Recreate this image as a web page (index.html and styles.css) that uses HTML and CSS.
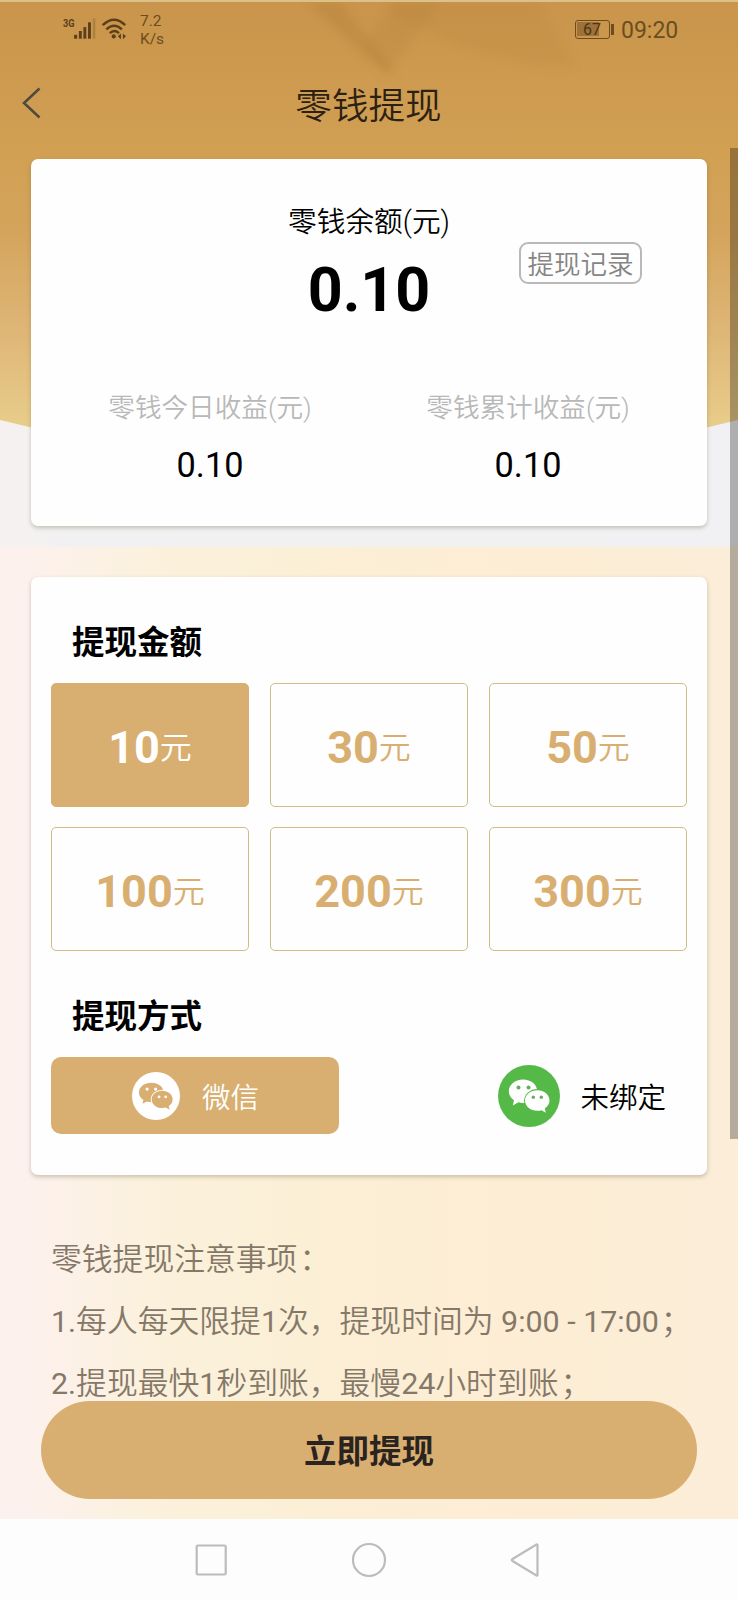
FILE: index.html
```html
<!DOCTYPE html>
<html lang="zh-CN">
<head>
<meta charset="utf-8">
<title>零钱提现</title>
<link rel="stylesheet" href="styles.css">
</head>
<body>
<div class="screen">
  <svg class="backdrop" width="738" height="547" viewBox="0 0 738 547" aria-hidden="true">
    <defs>
      <linearGradient id="gold" x1="0" y1="0" x2="0" y2="460" gradientUnits="userSpaceOnUse">
        <stop offset="0" stop-color="#c9944b"/>
        <stop offset=".33" stop-color="#d1a053"/>
        <stop offset=".5" stop-color="#d4a45c"/>
        <stop offset=".72" stop-color="#deb676"/>
        <stop offset=".92" stop-color="#e8cc8a"/>
      </linearGradient>
      <linearGradient id="grey" x1="0" y1="0" x2="1" y2="0">
        <stop offset="0" stop-color="#f6f1f1"/>
        <stop offset=".1" stop-color="#f1f1f1"/>
        <stop offset="1" stop-color="#f1f1f3"/>
      </linearGradient>
      <filter id="soft"><feGaussianBlur stdDeviation="4"/></filter>
    </defs>
    <rect width="738" height="547" fill="url(#grey)"/>
    <path d="M0 0H738V420Q369 512 0 420Z" fill="url(#gold)"/>
    <g fill="#a8782f" filter="url(#soft)">
      <path d="M308 2H340L368 36L396 74L368 60Z" opacity=".28"/>
      <path d="M388 2H536L576 66L540 66L470 50L400 20Z" opacity=".14"/>
      <path d="M366 42L392 2H440L385 78Z" opacity=".16"/>
    </g>
    <rect width="738" height="2" fill="#dbc088"/>
  </svg>

  <header class="status">
    <svg class="signal" width="80" height="32" viewBox="0 0 80 32" aria-hidden="true">
      <text class="net" x="0" y="12" textLength="12" lengthAdjust="spacingAndGlyphs">3G</text>
      <g fill="#5c401b">
        <rect x="11.500" y="20" width="3.200" height="4"/><rect x="16.500" y="16" width="3" height="8"/>
        <rect x="21.200" y="12" width="3" height="12"/><rect x="26" y="7" width="3" height="17"/>
      </g>
      <rect x="31" y="3" width="2.600" height="21" fill="#a88440"/>
      <g transform="translate(1.200 0)">
        <g fill="none" stroke="#5c401b" stroke-width="2.500">
          <path d="M40 10Q52 -1.500 63.500 10"/><path d="M43.800 14.400Q52 6.500 60 14.400"/><path d="M47.400 18.200Q52 13.800 57 18.200"/>
        </g>
        <circle cx="51.500" cy="21.700" r="2.200" fill="#5c401b"/>
        <path d="M59 18.500v6l-3.200-3zM61 18.500v6l3.200-3z" fill="#5c401b"/>
      </g>
    </svg>
    <div class="speed">7.2<br>K/s</div>
    <div class="battery"><span class="level">67</span></div>
    <div class="clock">09:20</div>
  </header>

  <nav class="titlebar">
    <svg class="back" width="20" height="32" viewBox="0 0 20 32"><path d="M17.500 1.500L2 16L17.500 30.500" fill="none" stroke="#4d4a3c" stroke-width="2.500"/></svg>
    <h1 class="title">零钱提现</h1>
  </nav>

  <section class="card balance">
    <div class="balance-label">零钱余额(元)</div>
    <div class="balance-value">0.10</div>
    <a class="history">提现记录</a>
    <div class="stats">
      <div class="stat"><div class="stat-label">零钱今日收益(元)</div><div class="stat-value">0.10</div></div>
      <div class="stat"><div class="stat-label">零钱累计收益(元)</div><div class="stat-value">0.10</div></div>
    </div>
  </section>

  <section class="card withdraw">
    <h2 class="heading">提现金额</h2>
    <div class="amounts">
      <div class="amount selected"><b>10</b>元</div>
      <div class="amount"><b>30</b>元</div>
      <div class="amount"><b>50</b>元</div>
      <div class="amount"><b>100</b>元</div>
      <div class="amount"><b>200</b>元</div>
      <div class="amount"><b>300</b>元</div>
    </div>
    <h2 class="heading method-heading">提现方式</h2>
    <div class="methods">
      <div class="wechat">
        <svg width="48" height="48" viewBox="0 0 62 62">
          <circle cx="31" cy="31" r="31" fill="#fff"/>
          <path d="M25 14c-9 0-16 5.400-16 12.500 0 4 2.200 7.200 5.700 9.500l-1.200 5 5.600-3c1.800.6 3.800.9 5.900.9 9 0 16-5.400 16-12.400S34 14 25 14z" fill="#d8af70"/>
          <ellipse cx="39" cy="35.500" rx="14.800" ry="12.600" fill="#fff"/>
          <path d="M39 24.300c-7.600 0-13.600 4.900-13.600 11.100S31.400 46.500 39 46.500c1.700 0 3.200-.2 4.600-.6l5 2.900-1.200-4.800c3.200-2 5.100-5.100 5.100-8.600C52.500 29.200 46.600 24.300 39 24.300z" fill="#d8af70"/>
          <g fill="#fff"><circle cx="19.500" cy="22" r="2.100"/><circle cx="30.500" cy="22" r="2.100"/><circle cx="35" cy="32" r="1.800"/><circle cx="43.500" cy="32" r="1.800"/></g>
        </svg>
        <span>微信</span>
      </div>
      <div class="binding">
        <svg width="62" height="62" viewBox="0 0 62 62">
          <circle cx="31" cy="31" r="31" fill="#55b947"/>
          <path d="M25 14.500c-8 0-14.200 5.200-14.200 11.700 0 3.700 2 6.900 5.200 9l-1.200 5.300 5.600-3.200c1.500.5 3 .7 4.600.7 8 0 14.200-5.200 14.200-11.800S33 14.500 25 14.500z" fill="#fff"/>
          <ellipse cx="39.300" cy="35.500" rx="13.200" ry="11.400" fill="#55b947"/>
          <path d="M39.300 25.200c-7 0-12.300 4.600-12.300 10.300s5.300 10.300 12.300 10.300c1.500 0 2.900-.2 4.200-.6l4.300 2.500-1-4.300c2.900-1.900 4.700-4.700 4.700-7.900 0-5.700-5.200-10.300-12.200-10.300z" fill="#fff"/>
          <g fill="#66ad5c"><circle cx="20.500" cy="22.500" r="2"/><circle cx="30.500" cy="22.500" r="2"/><circle cx="35.300" cy="32.300" r="1.700"/><circle cx="43.300" cy="32.300" r="1.700"/></g>
        </svg>
        <span>未绑定</span>
      </div>
    </div>
  </section>

  <section class="notes">
    <p>零钱提现注意事项<span class="punct">：</span></p>
    <p><span class="num">1.</span>每人每天限提<span class="num">1</span>次，提现时间为<span class="num"> 9:00 - 17:00</span><span class="punct">；</span></p>
    <p><span class="num">2.</span>提现最快<span class="num">1</span>秒到账，最慢<span class="num">24</span>小时到账<span class="punct">；</span></p>
  </section>
  <button class="submit">立即提现</button>

  <footer class="sysnav">
    <svg width="346" height="36" viewBox="0 0 346 36" fill="none" stroke="#bcbcbc" stroke-width="2.200">
      <rect x="1.700" y="3.500" width="29" height="29" rx="1"/>
      <circle cx="174" cy="18" r="16"/>
      <path d="M342.500 3V33Q342.500 34 341.500 33.500L317.500 19Q316 18 317.500 17L341.500 2.500Q342.500 2 342.500 3Z"/>
    </svg>
  </footer>
  <div class="scrollbar"></div>
</div>
</body>
</html>
```
FILE: styles.css
```css
* { box-sizing: border-box; }
body { margin: 0; font-family: Roboto, "Noto Sans CJK SC", sans-serif; font-weight: 350; color: #000; }
.screen {
  position: relative; width: 738px; height: 1600px; overflow: hidden;
  display: flex; flex-direction: column;
  background: linear-gradient(90deg, #fdf1ed 0, #fdf1ed 30px, #fbf1dc 150px, #fbefd6 300px, #fdedd4 520px, #fbedd8 738px);
}
.backdrop { position: absolute; left: 0; top: 0; }
.status, .titlebar, .card, .notes, .submit, .sysnav { position: relative; }
.status { height: 58px; display: flex; align-items: flex-start; padding: 15px 59px 0 63px; color: #6a4e20; }
.signal { flex: none; width: 77px; }
.net { font: 700 11.500px Roboto, sans-serif; fill: #5c401b; }
.speed { font-size: 15.500px; line-height: 18px; font-weight: 400; margin-top: -3px; }
.battery { position: relative; margin-left: auto; margin-top: 5px; width: 35px; height: 19px; padding: 1px; border: 1.500px solid #6d4d1c; border-radius: 3px; }
.battery::after { content: ""; position: absolute; right: -5px; top: 3px; width: 3px; height: 11px; background: #6d4d1c; }
.level { display: block; height: 14px; padding-left: 6px; font: 400 16px/15px Roboto, sans-serif; color: #4f3712; background: linear-gradient(90deg, #9c713a 22px, transparent 22px); }
.clock { margin-left: 11px; font-size: 23px; line-height: 31px; font-weight: 400; width: 58px; white-space: nowrap; }
.titlebar { height: 101px; display: flex; padding-left: 22px; }
.back { flex: none; margin-top: 29px; }
.title { flex: 1; margin: 31px 43px 0 0; text-align: center; font-size: 36.600px; line-height: 36px; font-weight: 350; color: #2d2113; }
.card { margin: 0 31px; background: #fefefe; border-radius: 7px; box-shadow: 0 2px 4px rgba(90, 80, 50, .3); flex: none; }
.balance { height: 367px; display: flex; flex-direction: column; padding-top: 45px; text-align: center; }
.balance-label { font-size: 28.700px; line-height: 36px; }
.balance-value { margin-top: 14px; font-size: 61px; line-height: 72px; font-weight: 700; }
.history { position: absolute; right: 65px; top: 83px; width: 123px; height: 42px; border: 2px solid #b9b9b9; border-radius: 9px; font-size: 26.500px; line-height: 42px; color: #858585; white-space: nowrap; }
.stats { display: grid; grid-template-columns: 1fr 1fr; padding: 0 20px; margin-top: 64px; }
.stat-label { font-size: 26.600px; line-height: 36px; color: #b8b8b8; }
.stat-value { margin-top: 17px; font-size: 34.300px; line-height: 44px; font-weight: 400; }
.withdraw { margin-top: 51px; height: 598px; padding: 46px 20px 0; }
.heading { margin: 0 0 0 21px; font-size: 32.500px; line-height: 40px; font-weight: 700; }
.amounts { margin-top: 20px; display: grid; grid-template-columns: repeat(3, 198px); gap: 20px 21px; }
.amount { height: 124px; padding-top: 5px; display: flex; justify-content: center; align-items: center; border: 1.500px solid #d0bd86; border-radius: 5px; font-size: 32px; color: #d8af70; line-height: 54px; }
.amount b { font-size: 45px; font-weight: 700; }
.amount.selected { background: #d8af70; border-color: #d8af70; color: #fff; }
.method-heading { margin-top: 46px; }
.methods { margin-top: 20px; display: flex; justify-content: space-between; align-items: center; font-size: 28.500px; }
.wechat { width: 288px; height: 77px; border-radius: 10px; background: #d8af70; color: #fff; display: flex; align-items: center; padding-left: 81px; gap: 22px; }
.binding { display: flex; align-items: center; gap: 20px; margin-right: 21px; }
.notes { margin: 54px 0 0 51px; height: 172px; flex: none; font-size: 30.800px; line-height: 62.200px; color: #857868; white-space: nowrap; }
.notes p { margin: 0; }
.num { font-weight: 400; font-size: 30.400px; }
.punct { padding-left: 2px; }
.submit { flex: none; margin: 0 41px; height: 98px; border: 0; border-radius: 49px; background: #d8af70; font: 700 32.500px/96px "Noto Sans CJK SC", sans-serif; padding: 0 0 2px; color: #2a2320; }
.sysnav { margin-top: 20px; height: 81px; background: #fdfdfd; display: flex; justify-content: center; padding: 23px 0 0; }
.sysnav svg { margin-left: -2px; }
.scrollbar { position: absolute; right: 0; top: 148px; width: 8px; height: 991px; background: rgba(0, 0, 0, .28); }
```
